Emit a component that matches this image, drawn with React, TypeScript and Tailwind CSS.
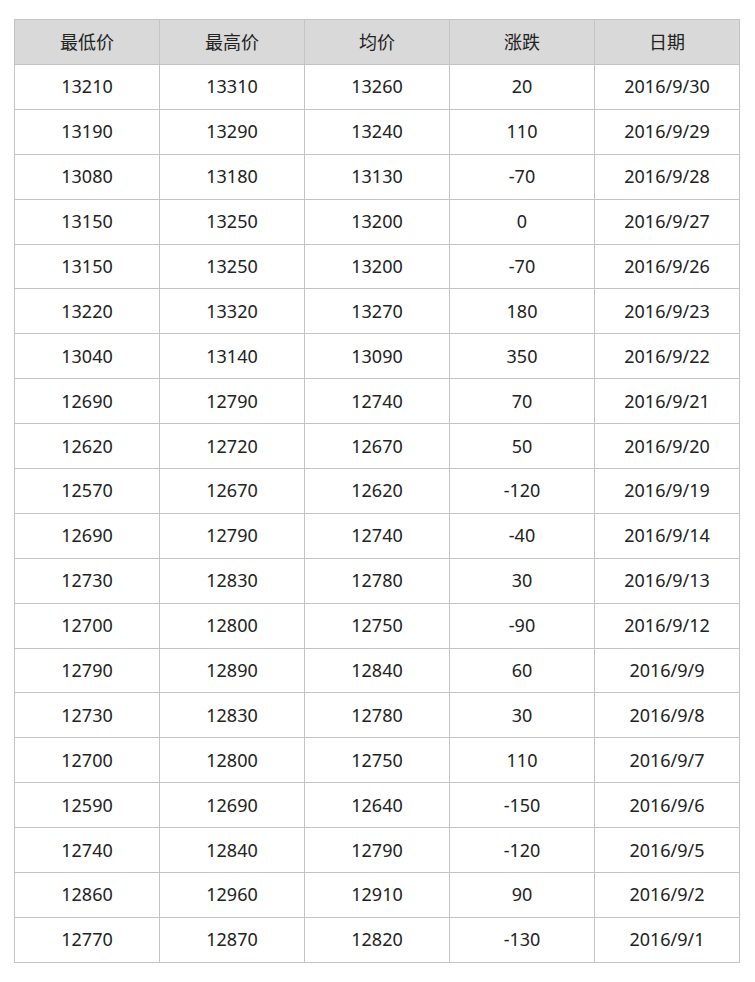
const rows: [string, string, string, string, string][] = [
  ["13210", "13310", "13260", "20", "2016/9/30"],
  ["13190", "13290", "13240", "110", "2016/9/29"],
  ["13080", "13180", "13130", "-70", "2016/9/28"],
  ["13150", "13250", "13200", "0", "2016/9/27"],
  ["13150", "13250", "13200", "-70", "2016/9/26"],
  ["13220", "13320", "13270", "180", "2016/9/23"],
  ["13040", "13140", "13090", "350", "2016/9/22"],
  ["12690", "12790", "12740", "70", "2016/9/21"],
  ["12620", "12720", "12670", "50", "2016/9/20"],
  ["12570", "12670", "12620", "-120", "2016/9/19"],
  ["12690", "12790", "12740", "-40", "2016/9/14"],
  ["12730", "12830", "12780", "30", "2016/9/13"],
  ["12700", "12800", "12750", "-90", "2016/9/12"],
  ["12790", "12890", "12840", "60", "2016/9/9"],
  ["12730", "12830", "12780", "30", "2016/9/8"],
  ["12700", "12800", "12750", "110", "2016/9/7"],
  ["12590", "12690", "12640", "-150", "2016/9/6"],
  ["12740", "12840", "12790", "-120", "2016/9/5"],
  ["12860", "12960", "12910", "90", "2016/9/2"],
  ["12770", "12870", "12820", "-130", "2016/9/1"],
];

const headers = ["最低价", "最高价", "均价", "涨跌", "日期"];

export default function App() {
  return (
    <div
      className="bg-white pt-[19px] pl-[14px] pb-[19px]"
      style={{ fontFamily: '"Noto Sans", "Noto Sans CJK SC", sans-serif' }}
    >
      <table className="w-[726px] border-collapse table-fixed text-[18px] text-[#222]">
        <thead>
          <tr className="bg-[#d9d9d9]">
            {headers.map((h) => (
              <th key={h} className="h-[45px] border border-[#c4c4c4] text-center font-normal p-0">
                {h}
              </th>
            ))}
          </tr>
        </thead>
        <tbody>
          {rows.map((r, i) => (
            <tr key={i}>
              {r.map((c, j) => (
                <td key={j} className="h-[44.9px] border border-[#c4c4c4] text-center p-0">
                  {c}
                </td>
              ))}
            </tr>
          ))}
        </tbody>
      </table>
    </div>
  );
}
